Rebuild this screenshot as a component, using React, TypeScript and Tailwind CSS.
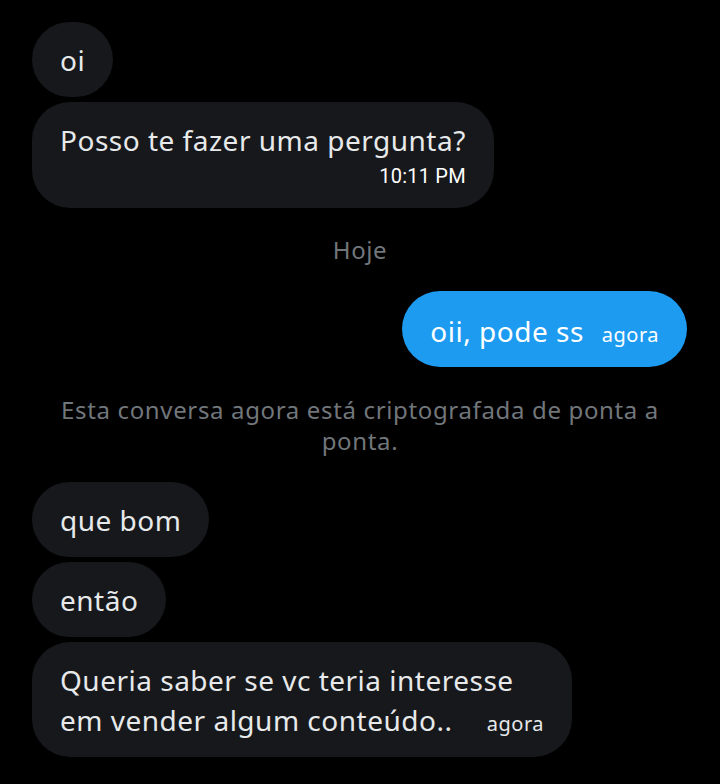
import React from "react";

const sans = { fontFamily: '"Noto Sans", "Open Sans", sans-serif' };

function Left({ children }: { children: React.ReactNode }) {
  return (
    <div className="flex justify-start">
      <div className="rounded-[38px] bg-[#16181c] px-[28px] pt-[18px] pb-[17px] text-[28px] leading-[40px] tracking-[0.5px] text-[#e7e9ea]">
        {children}
      </div>
    </div>
  );
}

export default function App() {
  return (
    <div className="min-h-[784px] w-[720px] bg-black px-[32px] pt-[22px]" style={sans}>
      <div className="flex flex-col gap-[5px]">
        <Left>oi</Left>
        <div className="flex justify-start">
          <div className="flex flex-col rounded-[38px] bg-[#16181c] px-[28px] pt-[18px] pb-[20px] text-[#e7e9ea]">
            <span className="text-[28px] leading-[40px] tracking-[0.5px]">Posso te fazer uma pergunta?</span>
            <span className="mt-[4px] self-end font-['Roboto',sans-serif] text-[20px] leading-[24px] tracking-[0.2px] text-white">
              10:11 PM
            </span>
          </div>
        </div>
      </div>

      <div className="mt-[26px] text-center text-[24px] leading-[32px] tracking-[0.6px] text-[#71767b]">Hoje</div>

      <div className="mt-[25px] flex justify-end">
        <div className="mr-[1px] flex items-baseline gap-[18px] rounded-[38px] bg-[#1d9bf0] px-[28px] pt-[20px] pb-[16px] text-white">
          <span className="text-[28px] leading-[40px] tracking-[0.5px]">oii, pode ss</span>
          <span className="text-[20px] leading-[24px] tracking-[0.5px]">agora</span>
        </div>
      </div>

      <div className="mt-[27px] px-[4px] text-center text-[24px] leading-[31px] tracking-[0.65px] text-[#71767b]">
        Esta conversa agora está criptografada de ponta a ponta.
      </div>

      <div className="mt-[26px] flex flex-col gap-[5px]">
        <Left>que bom</Left>
        <Left>então</Left>
        <div className="flex justify-start">
          <div className="flex w-[540px] flex-col rounded-[38px] bg-[#16181c] px-[28px] pt-[18px] pb-[17px] text-[28px] leading-[40px] tracking-[0.5px] text-[#e7e9ea]">
            <span>Queria saber se vc teria interesse</span>
            <div className="flex items-baseline justify-between">
              <span>em vender algum conteúdo..</span>
              <span className="text-[20px] leading-[24px] tracking-[0.5px]">agora</span>
            </div>
          </div>
        </div>
      </div>
    </div>
  );
}
